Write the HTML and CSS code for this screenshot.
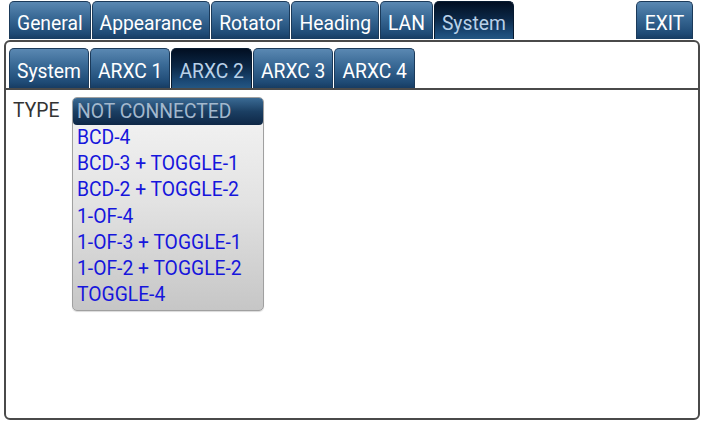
FILE: index.html
```html
<!DOCTYPE html>
<html>
<head>
<meta charset="utf-8">
<link rel="stylesheet" href="styles.css">
</head>
<body>
<div class="topbar">
  <div class="tab">General</div>
  <div class="tab">Appearance</div>
  <div class="tab">Rotator</div>
  <div class="tab">Heading</div>
  <div class="tab">LAN</div>
  <div class="tab active">System</div>
  <div class="spacer"></div>
  <div class="tab exit">EXIT</div>
</div>
<div class="panel">
  <div class="subtabs">
    <div class="tab">System</div>
    <div class="tab">ARXC 1</div>
    <div class="tab active">ARXC 2</div>
    <div class="tab">ARXC 3</div>
    <div class="tab">ARXC 4</div>
  </div>
  <div class="content">
    <div class="label">TYPE</div>
    <div class="dropdown">
      <div class="selected">NOT CONNECTED</div>
      <div class="item">BCD-4</div>
      <div class="item">BCD-3 + TOGGLE-1</div>
      <div class="item">BCD-2 + TOGGLE-2</div>
      <div class="item">1-OF-4</div>
      <div class="item">1-OF-3 + TOGGLE-1</div>
      <div class="item">1-OF-2 + TOGGLE-2</div>
      <div class="item">TOGGLE-4</div>
    </div>
  </div>
</div>
</body>
</html>
```

FILE: styles.css
```css
html, body {
  margin: 0;
  padding: 0;
  background: #ffffff;
  font-family: Roboto, "Noto Sans", sans-serif;
  font-size: 19.3px;
}

.topbar {
  display: flex;
  gap: 1px;
  height: 39px;
  padding: 1px 11px 0 9px;
  box-sizing: border-box;
}

.spacer {
  flex: 1;
}

.tab {
  display: flex;
  align-items: center;
  justify-content: center;
  padding: 6px 7px 0 7px;
  color: #ffffff;
  border: 1px solid #1b3a5a;
  border-bottom: none;
  border-radius: 5px 5px 0 0;
  background: linear-gradient(#5a88b2 0%, #3a6a96 40%, #1f4b76 85%, #173c62 100%);
  box-sizing: border-box;
  line-height: 1;
}

.tab.active {
  color: #b9d1e8;
  background: linear-gradient(#020f22 0%, #0b2746 45%, #1c4b78 85%, #245682 100%);
  border-color: #061a30;
}

.tab.exit {
  width: 57px;
  padding: 6px 0 0 0;
}

.panel {
  margin: 1px 4px 0 4px;
  height: 380px;
  box-sizing: border-box;
  border: 2px solid #4a4a4a;
  border-radius: 6px;
  display: flex;
  flex-direction: column;
}

.subtabs {
  display: flex;
  gap: 1px;
  height: 46px;
  padding: 6px 0 0 3px;
  box-sizing: border-box;
}

.subtabs .tab {
  height: 40px;
  padding: 6px 7px 0 7px;
}

.content {
  flex: 1;
  border-top: 2px solid #4a4a4a;
  display: flex;
  align-items: flex-start;
  padding: 7px 0 0 7px;
  gap: 14px;
}

.label {
  width: 45px;
  color: #333333;
  height: 27px;
  line-height: 28px;
}

.dropdown {
  width: 192px;
  box-sizing: border-box;
  border: 1px solid #a0a0a0;
  border-radius: 5px;
  background: linear-gradient(#f5f5f5 0%, #e2e2e2 50%, #c6c6c6 100%);
  box-shadow: 0 1px 1px rgba(0,0,0,0.15);
  padding-bottom: 2px;
}

.selected {
  height: 27px;
  line-height: 27px;
  padding-left: 4px;
  color: #a3b8cd;
  border-radius: 4px;
  background: linear-gradient(#3a6a94 0%, #1b3f63 50%, #0e2746 100%);
}

.item {
  height: 26.2px;
  line-height: 26.2px;
  padding-left: 4px;
  color: #1616dc;
}
```
